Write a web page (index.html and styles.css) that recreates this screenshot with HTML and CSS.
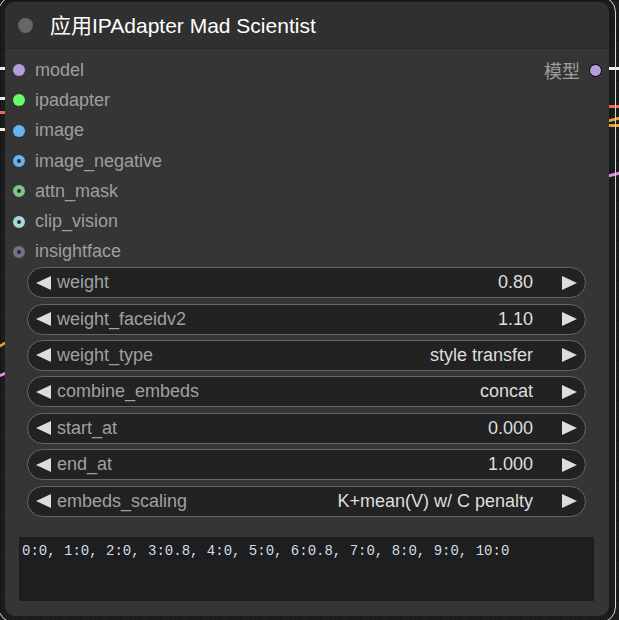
FILE: index.html
```html
<!DOCTYPE html>
<html>
<head>
<meta charset="utf-8">
<link rel="stylesheet" href="styles.css">
</head>
<body>
<div class="canvas">
  <div class="wire" style="left:0;top:67px;width:5px;background:#eee"></div>
  <div class="wire" style="left:0;top:97px;width:5px;background:#eee"></div>
  <div class="wire" style="left:0;top:111px;width:5px;background:#e66"></div>
  <div class="wire" style="left:0;top:128px;width:5px;background:#eee"></div>
  <div class="wire" style="left:0;top:343px;width:5px;background:#f0a030;transform:skewY(-30deg)"></div>
  <div class="wire" style="left:0;top:373px;width:5px;background:#e88ee0;transform:skewY(-20deg)"></div>
  <div class="wire" style="left:609px;top:67px;width:10px;background:#eee"></div>
  <div class="wire" style="left:609px;top:105px;width:10px;background:#e66"></div>
  <div class="wire" style="left:609px;top:118px;width:10px;background:#f0a030;transform:skewY(-15deg)"></div>
  <div class="wire" style="left:609px;top:124px;width:10px;background:#f0a030"></div>
  <div class="wire" style="left:609px;top:173px;width:10px;background:#e88ee0;transform:skewY(-15deg)"></div>

  <div class="node">
    <div class="title">
      <span class="title-dot"></span>
      <span class="title-text">应用IPAdapter Mad Scientist</span>
    </div>
    <div class="slots">
      <div class="inputs">
        <div class="slot"><span class="dot" style="background:#b39ddb"></span><span class="slot-label">model</span></div>
        <div class="slot"><span class="dot" style="background:#66ff66"></span><span class="slot-label">ipadapter</span></div>
        <div class="slot"><span class="dot" style="background:#64b5f6"></span><span class="slot-label">image</span></div>
        <div class="slot"><span class="dot ring" style="border-color:#64b5f6"></span><span class="slot-label">image_negative</span></div>
        <div class="slot"><span class="dot ring" style="border-color:#81c784"></span><span class="slot-label">attn_mask</span></div>
        <div class="slot"><span class="dot ring" style="border-color:#a8dadc"></span><span class="slot-label">clip_vision</span></div>
        <div class="slot"><span class="dot ring" style="border-color:#72728a"></span><span class="slot-label">insightface</span></div>
      </div>
      <div class="outputs">
        <div class="slot out"><span class="slot-label">模型</span><span class="dot outdot"></span></div>
      </div>
    </div>
    <div class="widgets">
      <div class="widget"><span class="arrow left"></span><span class="w-label">weight</span><span class="w-value">0.80</span><span class="arrow right"></span></div>
      <div class="widget"><span class="arrow left"></span><span class="w-label">weight_faceidv2</span><span class="w-value">1.10</span><span class="arrow right"></span></div>
      <div class="widget"><span class="arrow left"></span><span class="w-label">weight_type</span><span class="w-value">style transfer</span><span class="arrow right"></span></div>
      <div class="widget"><span class="arrow left"></span><span class="w-label">combine_embeds</span><span class="w-value">concat</span><span class="arrow right"></span></div>
      <div class="widget"><span class="arrow left"></span><span class="w-label">start_at</span><span class="w-value">0.000</span><span class="arrow right"></span></div>
      <div class="widget"><span class="arrow left"></span><span class="w-label">end_at</span><span class="w-value">1.000</span><span class="arrow right"></span></div>
      <div class="widget"><span class="arrow left"></span><span class="w-label">embeds_scaling</span><span class="w-value">K+mean(V) w/ C penalty</span><span class="arrow right"></span></div>
    </div>
    <div class="textbox">0:0, 1:0, 2:0, 3:0.8, 4:0, 5:0, 6:0.8, 7:0, 8:0, 9:0, 10:0</div>
  </div>
</div>
</body>
</html>
```
FILE: styles.css
```css
html, body {
  margin: 0;
  padding: 0;
}
body {
  width: 619px;
  height: 620px;
  overflow: hidden;
  background-color: #1d1d1d;
  background-image:
    linear-gradient(#161616 1px, transparent 1px),
    linear-gradient(90deg, #161616 1px, transparent 1px);
  background-size: 10px 10px;
  font-family: "Liberation Sans", Arial, "Noto Sans CJK SC", sans-serif;
}
.canvas {
  position: relative;
  width: 619px;
  height: 620px;
}
.wire {
  position: absolute;
  height: 3px;
}
.node {
  position: absolute;
  left: 5px;
  top: 2px;
  width: 604px;
  height: 614px;
  background: #353535;
  border-radius: 10px;
  display: flex;
  flex-direction: column;
  box-sizing: border-box;
}
.node::before {
  content: "";
  position: absolute;
  left: -7px;
  right: -7px;
  top: -6px;
  bottom: -7px;
  border: 1px solid #d8d8d8;
  border-radius: 16px;
  pointer-events: none;
}
.title {
  height: 46px;
  background: #303030;
  border-radius: 10px 10px 0 0;
  border-bottom: 1px solid #2a2a2a;
  display: flex;
  align-items: center;
  padding-left: 13px;
  flex: none;
}
.title-dot {
  width: 15px;
  height: 15px;
  border-radius: 50%;
  background: #666;
  margin-right: 17px;
  flex: none;
}
.title-text {
  color: #fff;
  font-size: 21px;
  position: relative;
  top: -1px;
}
.slots {
  display: flex;
  justify-content: space-between;
  padding: 6px 7px 0 8px;
}
.inputs, .outputs {
  display: flex;
  flex-direction: column;
}
.slot {
  height: 30.3px;
  display: flex;
  align-items: center;
}
.dot {
  width: 12px;
  height: 12px;
  border-radius: 50%;
  box-sizing: border-box;
  flex: none;
}
.dot.ring {
  border: 4px solid;
  background: #2a2a2a;
}
.slot-label {
  color: #9e9e9e;
  font-size: 18px;
  margin-left: 10px;
}
.out .slot-label {
  margin-left: 0;
  margin-right: 9px;
}
.outdot {
  width: 13px;
  height: 13px;
  background: #b39ddb;
  border: 1px solid #000;
}
.widgets {
  display: flex;
  flex-direction: column;
  gap: 5.45px;
  margin: 0 23px 0 22px;
}
.widget {
  height: 31px;
  box-sizing: border-box;
  border: 1px solid #666;
  border-radius: 16px;
  background: #222;
  display: flex;
  align-items: center;
  padding: 0 8px 0 8px;
}
.arrow {
  width: 0;
  height: 0;
  border-top: 7px solid transparent;
  border-bottom: 7px solid transparent;
  flex: none;
}
.arrow.left {
  border-right: 15px solid #ddd;
}
.arrow.right {
  border-left: 15px solid #ddd;
  margin-left: 29px;
}
.w-label {
  flex: 1;
  color: #a0a0a0;
  font-size: 18px;
  margin-left: 6px;
}
.w-value {
  color: #dedede;
  font-size: 18px;
}
.textbox {
  margin: 20px 15px 0 14px;
  height: 64px;
  background: #1d1e20;
  color: #d6dde2;
  font-family: "Liberation Mono", "Courier New", monospace;
  font-size: 14px;
  padding: 6px 3px;
  box-sizing: border-box;
  white-space: pre;
}
```
